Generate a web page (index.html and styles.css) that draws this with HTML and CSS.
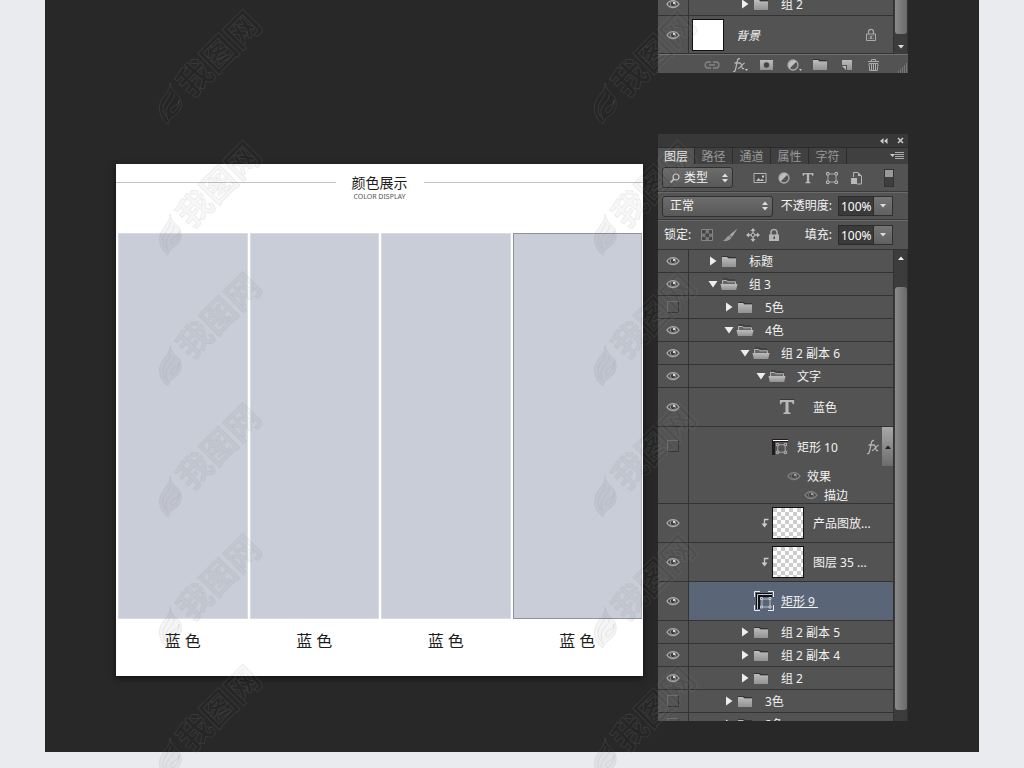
FILE: index.html
```html
<!DOCTYPE html>
<html lang="zh-CN">
<head>
<meta charset="utf-8">
<title>颜色展示</title>
<link rel="stylesheet" href="styles.css">
</head>
<body>
<svg class="defs" aria-hidden="true">
  <defs>
    <linearGradient id="metal" x1="0" y1="0" x2="0" y2="1"><stop offset="0" stop-color="#bdbdbd"/><stop offset="1" stop-color="#929292"/></linearGradient>
    <pattern id="checks" width="8" height="8" patternUnits="userSpaceOnUse"><rect width="8" height="8" fill="#fff"/><path d="M0 0h4v4H0zM4 4h4v4H4z" fill="#ccc"/></pattern>
  </defs>
  <symbol id="eye" viewBox="0 0 14 12"><path d="M1 6.2C3.8 1.4 10.2 1.4 13 6.2C10.2 10.6 3.8 10.6 1 6.2z" fill="#4a4a4a" stroke="#a9a9a9" stroke-width="1.3"/><circle cx="7" cy="6" r="2.7" fill="#3a3a3a" stroke="#8d8d8d"/><circle cx="8" cy="5" r="1.2" fill="#ddd"/></symbol>
  <symbol id="right" viewBox="0 0 8 10"><path d="M1 0.5L7.5 5L1 9.5z" fill="#eee"/></symbol>
  <symbol id="down" viewBox="0 0 10 10"><path d="M0.5 2H9.5L5 8.5z" fill="#eee"/></symbol>
  <symbol id="folder" viewBox="0 0 18 13"><path d="M2 2V1h6l1 1h7v1H2z" fill="#333"/><path d="M2 12V2h5l1.500 1.500H16V12z" fill="url(#metal)"/></symbol>
  <symbol id="folder-open" viewBox="0 0 18 13"><path d="M2.5 6V2.500h4l1.200 1.300h7.800V6" fill="#666" stroke="#b5b5b5"/><path d="M3 1h4.500l1 1H15" fill="none" stroke="#333"/><path d="M0.500 6h17l-1.300 6H1.800z" fill="url(#metal)"/></symbol>
  <symbol id="updown" viewBox="0 0 6 10"><path d="M3 0.500L6 4H0zM0 6h6L3 9.500z" fill="#ddd"/></symbol>
  <symbol id="small-down" viewBox="0 0 6 4"><path d="M0 0h6L3 3.500z" fill="#ddd"/></symbol>
  <symbol id="small-up" viewBox="0 0 6 4"><path d="M0 4h6L3 0.500z" fill="#eee"/></symbol>
  <symbol id="lock" viewBox="0 0 12 14"><path d="M3 7V4.500a3 3 0 0 1 6 0V7" fill="none" stroke="#aaa" stroke-width="1.600"/><path d="M1 6.500h10V13H1z" fill="#b5b5b5"/><path d="M5.500 8.500h1.500v2.500H5.500z" fill="#444"/></symbol>
  <symbol id="lock-line" viewBox="0 0 12 14"><path d="M3.500 6V3.800a2.500 2.500 0 0 1 5 0V6" fill="none" stroke="#aaa" stroke-width="1.200"/><path d="M1.500 6h9v6.500h-9z" fill="#555" stroke="#aaa"/><path d="M3 8h6M3 10.500h6" stroke="#777"/><path d="M5.500 8h1v3h-1z" fill="#ccc"/></symbol>
  <symbol id="half" viewBox="0 0 14 14"><circle cx="7" cy="7" r="5" fill="#555" stroke="#aaa" stroke-width="1.300"/><path d="M10.500 3.500A5 5 0 0 0 3.500 10.500z" fill="#c0c0c0"/></symbol>
  <symbol id="tee" viewBox="0 0 18 18"><path d="M1 1h16v5h-1.300c-.4-2-1.300-2.700-3.200-2.700h-1.800v10.200c0 1.400.6 1.800 2.300 2V17H5v-1.500c1.700-.2 2.300-.6 2.300-2V3.300H5.500C3.600 3.300 2.700 4 2.300 6H1z" fill="#b8b8b8"/><path d="M1 0.500h16" stroke="#333"/></symbol>
  <symbol id="shape" viewBox="0 0 14 14"><path d="M3 3h8v8H3z" fill="none" stroke="#aaa"/><path d="M1.500 1.500h2.500v2.500H1.500zM10 1.500h2.500v2.500H10zM1.500 10h2.500v2.500H1.500zM10 10h2.500v2.500H10z" fill="#555" stroke="#b8b8b8"/></symbol>
  <symbol id="clip" viewBox="0 0 8 10"><path d="M7.500 1.500H3.500V7" fill="none" stroke="#ccc" stroke-width="1.300"/><path d="M0.500 5.500h6L3.500 9.500z" fill="#ccc"/></symbol>
  <symbol id="fx" viewBox="0 0 14 16"><path d="M1 14.500c1.500.5 2.200-.4 2.600-2.400l1.700-8C5.700 2 6.500 1.200 8 1.600M2.500 6h5" fill="none" stroke="#b5b5b5" stroke-width="1.300"/><path d="M7 6c2-.4 2.200 1 2.600 3s.8 3.200 2.600 2.500M12.800 6C10.500 6.500 9 10.500 6 11.800" fill="none" stroke="#b5b5b5" stroke-width="1.200"/></symbol>
  <symbol id="mark" viewBox="0 0 104 118">
    <path class="mark-flame" d="M11 76C12 84 3 89 1 97C-1 105 3 113 9 117C10 112 14 110 18 107C23 102 23 96 21 91C18 86 12 84 11 76z"/>
    <path class="mark-line" d="M11 84C12 90 5 93 4 101C4 105 5 108 7 110M15 87C17 93 8 96 7 104C7 107 8 110 9 113M20 93C20 99 15 97 12 102C11 104 13 107 15 105C18 102 20 99 20 93"/>
    <text class="mark-text" x="60" y="59" text-anchor="middle" transform="rotate(-45 60 47)">我图网</text>
  </symbol>
</svg>

<main class="stage">
  <section class="poster-area">
    <article class="poster">
      <header class="poster-head">
        <span class="rule"></span>
        <div class="poster-title"><h1>颜色展示</h1><p>COLOR DISPLAY</p></div>
        <span class="rule"></span>
      </header>
      <div class="swatches">
        <figure><div class="swatch"></div><figcaption>蓝 色</figcaption></figure>
        <figure><div class="swatch"></div><figcaption>蓝 色</figcaption></figure>
        <figure><div class="swatch"></div><figcaption>蓝 色</figcaption></figure>
        <figure><div class="swatch outlined"></div><figcaption>蓝 色</figcaption></figure>
      </div>
    </article>
  </section>

  <aside class="panels">
    <section class="panel panel-top">
      <div class="body">
        <ul class="layers">
          <li class="row first"><button class="vis" aria-label="显示"><svg class="i-eye"><use href="#eye"/></svg></button><div class="name l2"><svg class="i-arrow"><use href="#right"/></svg><svg class="i-folder"><use href="#folder"/></svg><span>组 2</span></div></li>
          <li class="row background"><button class="vis" aria-label="显示"><svg class="i-eye"><use href="#eye"/></svg></button><div class="name"><i class="thumb white"></i><em>背景</em><svg class="i-lock end"><use href="#lock-line"/></svg></div></li>
        </ul>
        <div class="scroll bottom"><span class="thumb-bar"></span><svg class="i-small"><use href="#small-down"/></svg></div>
      </div>
      <footer class="foot">
        <button aria-label="链接图层"><svg class="i-tool" viewBox="0 0 18 14"><path d="M8 4H5a3 3 0 0 0 0 6h3M10 4h3a3 3 0 0 1 0 6h-3M6 7h6" fill="none" stroke="#858585" stroke-width="1.300"/></svg></button>
        <button aria-label="图层样式"><svg class="i-tool" viewBox="0 0 18 14"><use href="#fx" x="2" y="-1" width="14" height="16"/><path d="M15 11h3l-1.500 2z" fill="#ccc"/></svg></button>
        <button aria-label="添加蒙版"><svg class="i-tool" viewBox="0 0 18 14"><path d="M3 2h13v10H3z" fill="url(#metal)"/><circle cx="9.500" cy="7" r="2.700" fill="#444"/></svg></button>
        <button aria-label="调整图层"><svg class="i-tool" viewBox="0 0 18 14"><use href="#half" x="2" width="14" height="14"/><path d="M15 11h3l-1.500 2z" fill="#ccc"/></svg></button>
        <button aria-label="新建组"><svg class="i-tool" viewBox="0 0 18 14"><use href="#folder" width="18" height="13"/></svg></button>
        <button aria-label="新建图层"><svg class="i-tool" viewBox="0 0 18 14"><path d="M4 2h10v10H9V7H4z" fill="url(#metal)"/><path d="M4 8h4v4z" fill="#bbb"/></svg></button>
        <button aria-label="删除"><svg class="i-tool" viewBox="0 0 18 14"><path d="M3 3.500h11M6.500 3V1.500h4V3M4 5.500h9l-.7 7H4.700zM6.500 6v6M8.500 6v6M10.500 6v6" fill="none" stroke="#aaa"/></svg></button>
        <svg class="i-grip" viewBox="0 0 10 10"><path d="M8 1h1M6 3h1M8 3h1M4 5h1M6 5h1M8 5h1M2 7h1M4 7h1M6 7h1M8 7h1M0 9h1M2 9h1M4 9h1M6 9h1M8 9h1" stroke="#999"/></svg>
      </footer>
    </section>

    <section class="panel panel-main">
      <div class="titlebar">
        <button aria-label="折叠"><svg width="8" height="6" viewBox="0 0 8 6"><path d="M3.500 0v6L0 3zM7.500 0v6L4 3z" fill="#ccc"/></svg></button>
        <button aria-label="关闭"><svg width="7" height="7" viewBox="0 0 7 7"><path d="M1 1l5 5M6 1L1 6" stroke="#ccc" stroke-width="1.500"/></svg></button>
      </div>
      <nav class="tabs">
        <button class="active">图层</button><button>路径</button><button>通道</button><button>属性</button><button>字符</button>
        <button class="menu" aria-label="菜单"><svg width="14" height="8" viewBox="0 0 14 8"><path d="M0 2h5L2.500 5z" fill="#ccc"/><path d="M5 .5h9M5 2.500h9M5 4.500h9M5 6.500h9" stroke="#aaa"/></svg></button>
      </nav>
      <div class="bar filter">
        <div class="select kind"><svg class="i-search" viewBox="0 0 10 10"><circle cx="6" cy="4" r="3" fill="none" stroke="#ccc" stroke-width="1.200"/><path d="M3.800 6.200L.5 9.500" stroke="#ccc" stroke-width="1.500"/></svg><select aria-label="筛选类型"><option>类型</option></select><svg class="i-updown"><use href="#updown"/></svg></div>
        <div class="icons">
          <button aria-label="像素图层"><svg class="i-14" viewBox="0 0 14 14"><path d="M1 2.500h12v9H1z" fill="#4a4a4a" stroke="#b5b5b5"/><path d="M3 10l2.500-3L7.500 9l1.500-1.500L11 10z" fill="#bbb"/><path d="M9 4.500h2v2H9z" fill="#ccc"/></svg></button>
          <button aria-label="调整图层"><svg class="i-14"><use href="#half"/></svg></button>
          <button aria-label="文字图层"><svg class="i-14" viewBox="0 0 14 14"><use href="#tee" x="1" y="1" width="12" height="12"/></svg></button>
          <button aria-label="形状图层"><svg class="i-14"><use href="#shape"/></svg></button>
          <button aria-label="智能对象"><svg class="i-14" viewBox="0 0 14 14"><path d="M4.500 6V1.500H9L12.500 5v8H8" fill="#555" stroke="#b5b5b5"/><path d="M9 1.500V5h3.500M2 7h6v6H2z" fill="#b8b8b8"/></svg></button>
        </div>
        <button class="switch end" aria-label="筛选开关"></button>
      </div>
      <div class="bar">
        <div class="select mode"><select aria-label="混合模式"><option>正常</option></select><svg class="i-updown"><use href="#updown"/></svg></div>
        <div class="field end"><label for="opacity">不透明度:</label><input id="opacity" value="100%"><button aria-label="调整不透明度"><svg class="i-small"><use href="#small-down"/></svg></button></div>
      </div>
      <div class="bar">
        <span class="lock-label">锁定:</span>
        <div class="icons locks">
          <button aria-label="锁定透明像素"><svg class="i-14" viewBox="0 0 14 14"><path d="M1.500 1.500h11v11h-11z" fill="#777" stroke="#858585"/><path d="M2 2h3.500v3.500H2zM9 2h3v3.500H9zM5.500 5.500H9V9H5.500zM2 9h3.500v3H2zM9 9h3v3H9z" fill="#444"/></svg></button>
          <button aria-label="锁定图像像素"><svg class="i-16" viewBox="0 0 16 14"><path d="M15.500 0.500L10 9 7.500 7z" fill="#aaa"/><path d="M7 7.500L9.500 9.500C8 12.500 4 13.500.5 13 4 12 4 8.500 7 7.500z" fill="#999"/></svg></button>
          <button aria-label="锁定位置"><svg class="i-14" viewBox="0 0 14 14"><path d="M7 1v12M1 7h12" stroke="#bbb" stroke-width="1.300"/><path d="M7 0L4.500 3h5zM7 14l-2.500-3h5zM0 7l3-2.500v5zM14 7l-3-2.500v5z" fill="#bbb"/><path d="M5.500 5.500h3v3h-3z" fill="#555" stroke="#aaa"/></svg></button>
          <button aria-label="锁定全部"><svg class="i-lock"><use href="#lock"/></svg></button>
        </div>
        <div class="field end"><label for="fill">填充:</label><input id="fill" value="100%"><button aria-label="调整填充"><svg class="i-small"><use href="#small-down"/></svg></button></div>
      </div>
      <div class="body listed">
        <ul class="layers">
          <li class="row"><button class="vis" aria-label="显示"><svg class="i-eye"><use href="#eye"/></svg></button><div class="name l0"><svg class="i-arrow"><use href="#right"/></svg><svg class="i-folder"><use href="#folder"/></svg><span>标题</span></div></li>
          <li class="row"><button class="vis" aria-label="显示"><svg class="i-eye"><use href="#eye"/></svg></button><div class="name l0"><svg class="i-arrow"><use href="#down"/></svg><svg class="i-folder"><use href="#folder-open"/></svg><span>组 3</span></div></li>
          <li class="row"><button class="vis" aria-label="隐藏"><span class="box"></span></button><div class="name l1"><svg class="i-arrow"><use href="#right"/></svg><svg class="i-folder"><use href="#folder"/></svg><span>5色</span></div></li>
          <li class="row"><button class="vis" aria-label="显示"><svg class="i-eye"><use href="#eye"/></svg></button><div class="name l1"><svg class="i-arrow"><use href="#down"/></svg><svg class="i-folder"><use href="#folder-open"/></svg><span>4色</span></div></li>
          <li class="row"><button class="vis" aria-label="显示"><svg class="i-eye"><use href="#eye"/></svg></button><div class="name l2"><svg class="i-arrow"><use href="#down"/></svg><svg class="i-folder"><use href="#folder-open"/></svg><span>组 2 副本 6</span></div></li>
          <li class="row"><button class="vis" aria-label="显示"><svg class="i-eye"><use href="#eye"/></svg></button><div class="name l3"><svg class="i-arrow"><use href="#down"/></svg><svg class="i-folder"><use href="#folder-open"/></svg><span>文字</span></div></li>
          <li class="row tall"><button class="vis" aria-label="显示"><svg class="i-eye"><use href="#eye"/></svg></button><div class="name text-layer"><svg class="i-16"><use href="#tee"/></svg><span>蓝色</span></div></li>
          <li class="row effects"><button class="vis" aria-label="隐藏"><span class="box"></span></button>
            <div class="stack">
              <div class="name styled"><svg class="i-vector" viewBox="0 0 16 16"><path d="M0 0h16v3H3v13H0z" fill="#221b1b"/><path d="M1 1.500h15" stroke="#fff"/><use href="#shape" x="3" y="3" width="13" height="13"/></svg><span>矩形 10</span><svg class="i-fx end"><use href="#fx"/></svg><button class="toggle" aria-label="折叠效果"><svg class="i-small" viewBox="0 0 6 4"><path d="M0 4h6L3 .5z" fill="#222"/></svg></button></div>
              <div class="name effect"><svg class="i-eye dim"><use href="#eye"/></svg><span>效果</span></div>
              <div class="name effect nested"><svg class="i-eye dim"><use href="#eye"/></svg><span>描边</span></div>
            </div></li>
          <li class="row tall"><button class="vis" aria-label="显示"><svg class="i-eye"><use href="#eye"/></svg></button><div class="name clipped"><svg class="i-clip"><use href="#clip"/></svg><svg class="thumb"><rect width="30" height="30" fill="url(#checks)"/></svg><span>产品图放...</span></div></li>
          <li class="row tall"><button class="vis" aria-label="显示"><svg class="i-eye"><use href="#eye"/></svg></button><div class="name clipped"><svg class="i-clip"><use href="#clip"/></svg><svg class="thumb"><rect width="30" height="30" fill="url(#checks)"/></svg><span>图层 35 ...</span></div></li>
          <li class="row tall"><button class="vis" aria-label="显示"><svg class="i-eye"><use href="#eye"/></svg></button><div class="name selected"><svg class="i-20" viewBox="0 0 20 20"><path d="M.5 6V.5H6M14 .5h5.500V6M19.500 14v5.500H14M6 19.500H.5V14" fill="none" stroke="#eee"/><path d="M2 2h16v4H6v12H2z" fill="#111"/><path d="M3.500 18V3.500H18" fill="none" stroke="#bcc6d6"/><path d="M8 8h8v8H8z" fill="none" stroke="#b8bfca"/><path d="M6.500 6.500h2v2h-2zM15 6.500h2v2h-2zM6.500 15h2v2h-2zM15 15h2v2h-2z" fill="#5a6678" stroke="#c6ccd6"/></svg><span>矩形 9&nbsp;</span></div></li>
          <li class="row"><button class="vis" aria-label="显示"><svg class="i-eye"><use href="#eye"/></svg></button><div class="name l2"><svg class="i-arrow"><use href="#right"/></svg><svg class="i-folder"><use href="#folder"/></svg><span>组 2 副本 5</span></div></li>
          <li class="row"><button class="vis" aria-label="显示"><svg class="i-eye"><use href="#eye"/></svg></button><div class="name l2"><svg class="i-arrow"><use href="#right"/></svg><svg class="i-folder"><use href="#folder"/></svg><span>组 2 副本 4</span></div></li>
          <li class="row"><button class="vis" aria-label="显示"><svg class="i-eye"><use href="#eye"/></svg></button><div class="name l2"><svg class="i-arrow"><use href="#right"/></svg><svg class="i-folder"><use href="#folder"/></svg><span>组 2</span></div></li>
          <li class="row"><button class="vis" aria-label="隐藏"><span class="box"></span></button><div class="name l1"><svg class="i-arrow"><use href="#right"/></svg><svg class="i-folder"><use href="#folder"/></svg><span>3色</span></div></li>
          <li class="row cut"><button class="vis" aria-label="隐藏"><span class="box"></span></button><div class="name l1"><svg class="i-arrow"><use href="#right"/></svg><svg class="i-folder"><use href="#folder"/></svg><span>2色</span></div></li>
        </ul>
        <div class="scroll top"><svg class="i-small"><use href="#small-up"/></svg><span class="thumb-bar"></span></div>
      </div>
    </section>
  </aside>
</main>

<div class="marks" aria-hidden="true">
  <svg><use href="#mark"/></svg><svg><use href="#mark"/></svg>
  <svg><use href="#mark"/></svg><svg><use href="#mark"/></svg>
  <svg><use href="#mark"/></svg><svg><use href="#mark"/></svg>
  <svg><use href="#mark"/></svg><svg><use href="#mark"/></svg>
  <svg><use href="#mark"/></svg><svg><use href="#mark"/></svg>
  <svg><use href="#mark"/></svg><svg><use href="#mark"/></svg>
</div>
</body>
</html>
```

FILE: styles.css
```css
* { box-sizing: border-box; }
body {
  margin: 0;
  min-height: 100vh;
  position: relative;
  overflow: hidden;
  background: #eaebef;
  font: 12px/16px "Noto Sans", "Noto Sans CJK SC", sans-serif;
}
.defs { position: absolute; width: 0; height: 0; }
svg { display: block; flex: none; }
button, input, select { font: inherit; color: inherit; border: 0; padding: 0; margin: 0; background: none; }
button { display: flex; align-items: center; justify-content: center; }
h1, p, figure, ul { margin: 0; padding: 0; }
.end { margin-left: auto; }

.stage {
  display: flex;
  gap: 15px;
  margin: 0 45px;
  padding: 0 71px 31px;
  background: #282828;
}

/* poster */
.poster-area { flex: 1; padding-top: 164px; }
.poster { background: #fff; color: #1d1d1d; box-shadow: 0 2px 6px #111; padding-bottom: 24px; }
.poster-head { display: flex; gap: 16px; height: 69px; padding-top: 11px; }
.rule { flex: 1; height: 1px; margin-top: 7px; background: #c4c4c4; }
.poster-title { text-align: center; }
.poster-title h1 { font-size: 14px; line-height: 16px; font-weight: 400; }
.poster-title p { font-size: 7px; line-height: 11px; color: #555; }
.swatches { display: grid; grid-template-columns: repeat(4, 1fr); gap: 2px; padding: 0 1px 0 2px; }
.swatch { height: 386px; background: #c9cdd7; border: 1px solid #d8dbe2; }
.swatch.outlined { border-color: #8e929b; border-right-color: #b0b3bb; }
.swatches figcaption { padding-top: 11px; text-align: center; font-size: 16px; line-height: 22px; }

/* panels */
.panels { width: 250px; color: #f2f2f2; }
.panel { background: #535353; }
.panel-top { overflow: hidden; }
.panel-main { margin-top: 61px; border-radius: 3px 3px 0 0; overflow: hidden; }
.body { display: flex; }
.layers { flex: 1; list-style: none; }
.listed { border-top: 1px solid #333; }
.row { display: flex; height: 23px; border-bottom: 1px solid #333; }
.row.first { margin-top: -7px; }
.row.background { height: 38px; }
.row.tall { height: 39px; }
.row.effects { height: 77px; }
.row.cut { height: 8px; overflow: hidden; border: 0; }
.row.cut > * { height: 22px; }
.vis { width: 31px; border-right: 1px solid #333; }
.effects .vis { padding-bottom: 38px; }
.box { width: 12px; height: 12px; border: 1px solid #383838; border-top-color: #6e6e6e; border-left-color: #6e6e6e; }
.name { flex: 1; display: flex; align-items: center; }
.name span, .name em { padding-top: 2px; }
.l0 { padding-left: 19px; }
.l1 { padding-left: 35px; }
.l2 { padding-left: 51px; }
.l3 { padding-left: 67px; }
.i-arrow { width: 10px; height: 10px; margin-right: 2px; }
.i-folder { width: 18px; height: 13px; margin-right: 11px; }
.i-eye { width: 14px; height: 12px; }
.i-eye.dim { opacity: .55; }
.i-lock { width: 12px; height: 14px; }
.i-small { width: 6px; height: 4px; }
.i-14 { width: 14px; height: 14px; }
.i-16 { width: 16px; height: 16px; }
.i-20 { width: 20px; height: 20px; margin-right: 7px; }
.i-tool { width: 18px; height: 14px; }
.i-fx { width: 14px; height: 16px; margin-right: 2px; }
.i-clip { width: 8px; height: 10px; margin-right: 3px; }
.i-vector { width: 16px; height: 16px; margin-right: 9px; }
.thumb { width: 32px; height: 32px; border: 1px solid #111; margin-right: 9px; }
.thumb.white { background: #fff; margin: 0 12px 0 3px; }
.background .i-lock { margin-right: 16px; }
.text-layer { padding-left: 90px; gap: 18px; }
.clipped { padding-left: 72px; }
.selected { padding-left: 65px; background: #5a6678; text-decoration: underline; }
.stack { flex: 1; display: flex; flex-direction: column; }
.stack .name { flex: none; height: 19px; }
.stack .styled { height: 39px; padding-left: 83px; }
.effect { padding-left: 98px; gap: 6px; }
.effect.nested { padding-left: 115px; }
.toggle { width: 11px; height: 39px; background: linear-gradient(#a8a8a8, #6c6c6c); }
.scroll { width: 15px; display: flex; flex-direction: column; align-items: center; background: #3c3c3c; border: solid #323232; border-width: 0 1px; }
.thumb-bar { flex: 1; width: 12px; border-radius: 3px; background: linear-gradient(90deg, #8a8a8a, #6a6a6a); }
.scroll.top { padding: 6px 0 11px; gap: 27px; }
.scroll.bottom { padding-bottom: 5px; gap: 11px; }
.scroll.bottom .thumb-bar { border-radius: 0 0 3px 3px; }
.foot { display: flex; align-items: center; gap: 9px; height: 19px; padding-left: 45px; border-top: 1px solid #707070; }
.foot button { padding-top: 2px; }
.i-grip { width: 10px; height: 10px; margin-left: auto; align-self: flex-end; }

.titlebar { display: flex; justify-content: flex-end; align-items: center; gap: 9px; height: 13px; padding-right: 4px; background: #383838; }
.tabs { display: flex; height: 17px; background: #404040; color: #999; border-top: 1px solid #2c2c2c; }
.tabs button { width: 38px; padding-top: 2px; border-right: 1px solid #2c2c2c; line-height: 14px; }
.tabs .active { width: 37px; background: #535353; color: #eee; }
.tabs .menu { width: 22px; margin-left: auto; padding: 0; border: 0; }
.bar { display: flex; align-items: center; height: 28px; padding: 0 15px 0 4px; border-top: 1px solid #6a6a6a; border-bottom: 1px solid #3a3a3a; }
.bar:nth-of-type(4) { border-bottom: 0; height: 29px; }
.bar.filter { padding-right: 14px; border-top: 0; }
.select { display: flex; align-items: center; height: 21px; padding: 0 4px 0 7px; border: 1px solid #303030; border-radius: 3px; background: linear-gradient(#6c6c6c, #585858); }
.select select { flex: 1; min-width: 0; appearance: none; }
.kind { width: 71px; }
.kind select { padding-left: 4px; }
.mode { width: 111px; }
.i-search { width: 10px; height: 10px; }
.i-updown { width: 6px; height: 10px; }
.icons { display: flex; align-items: center; gap: 10px; margin-left: 20px; }
.lock-label { padding-left: 2px; }
.icons.locks { gap: 8px; margin-left: 9px; }
.switch { width: 10px; height: 18px; border: 1px solid #333; background: linear-gradient(#999 0 45%, #3e3e3e 45%); }
.field { display: flex; align-items: center; }
.field label { margin-right: 6px; }
.field input { width: 36px; height: 20px; padding-left: 2px; background: #3a3a3a; border: 1px solid #2c2c2c; color: #fff; }
.field button { width: 19px; height: 20px; border: 1px solid #303030; border-left: 0; background: linear-gradient(#757575, #606060); }

/* repeated overlay mark */
.marks {
  position: absolute;
  inset: 7px 0 0 159px;
  display: grid;
  grid-template-columns: 435px 104px;
  grid-auto-rows: 131px;
  overflow: hidden;
  pointer-events: none;
}
.marks svg { width: 104px; height: 118px; }
.mark-text { font: 700 34px "Noto Sans CJK SC", sans-serif; }
.mark-text, .mark-flame { fill: rgba(0, 0, 0, .04); stroke: rgba(150, 150, 150, .16); stroke-width: 1px; }
.mark-line { fill: none; stroke: rgba(150, 150, 150, .18); stroke-width: 1px; }
```
